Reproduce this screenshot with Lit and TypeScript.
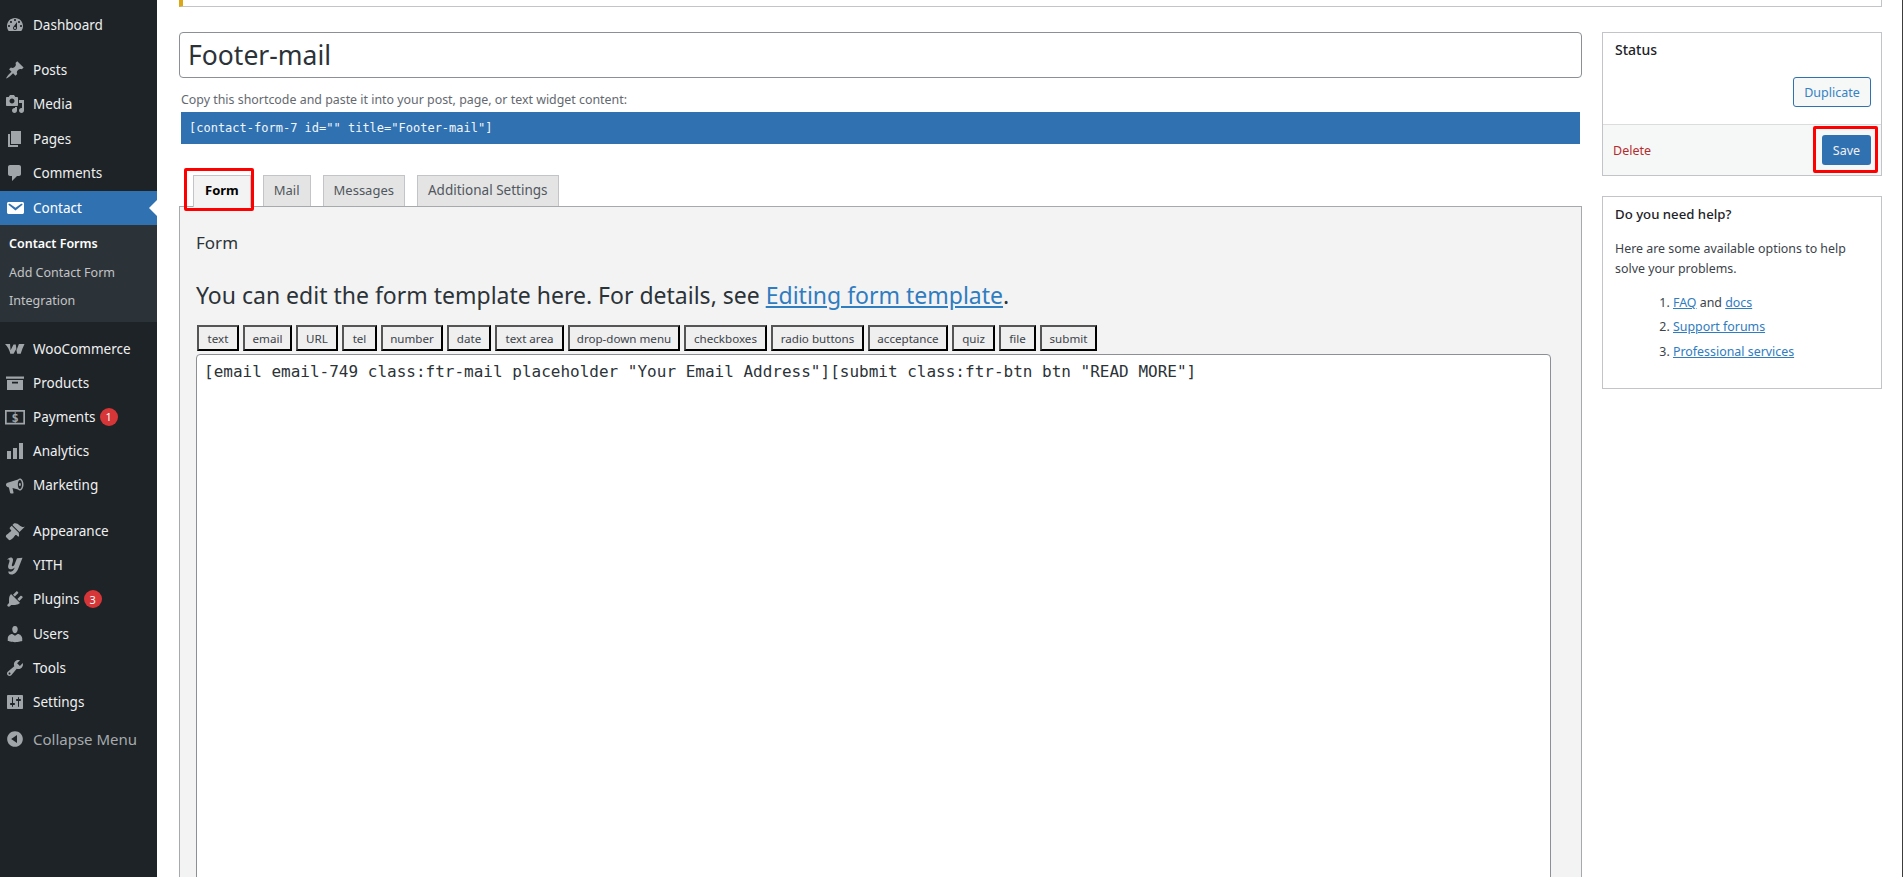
import { LitElement, html, css, svg } from "lit";
import { customElement } from "lit/decorators.js";

const I: Record<string, any> = {
  dashboard: svg`<path d="M3.76 16h12.48c1.1-1.37 1.76-3.11 1.76-5 0-4.42-3.58-8-8-8s-8 3.58-8 8c0 1.89.66 3.63 1.76 5zM10 4c.55 0 1 .45 1 1s-.45 1-1 1-1-.45-1-1 .45-1 1-1zM6 6c.55 0 1 .45 1 1s-.45 1-1 1-1-.45-1-1 .45-1 1-1zm8 0c.55 0 1 .45 1 1s-.45 1-1 1-1-.45-1-1 .45-1 1-1zm-5.37 5.55L12 7v6c0 1.1-.9 2-2 2s-2-.9-2-2c0-.57.24-1.08.63-1.45zM4 10c.55 0 1 .45 1 1s-.45 1-1 1-1-.45-1-1 .45-1 1-1zm12 0c.55 0 1 .45 1 1s-.45 1-1 1-1-.45-1-1 .45-1 1-1zm-5 3c0-.55-.45-1-1-1s-1 .45-1 1 .45 1 1 1 1-.45 1-1z" fill-rule="evenodd"/>`,
  post: svg`<path d="M10.44 3.02l1.82-1.82 6.36 6.35-1.83 1.82c-1.05-.68-2.48-.57-3.41.36l-.75.75c-.92.93-1.04 2.35-.35 3.41l-1.83 1.82-2.41-2.41-2.8 2.79c-.42.42-3.38 2.71-3.8 2.29s1.86-3.39 2.28-3.81l2.79-2.79L4.1 9.36l1.83-1.82c1.05.69 2.48.57 3.4-.36l.75-.75c.93-.92 1.05-2.35.36-3.41z"/>`,
  media: svg`<path fill-rule="evenodd" d="M13 11V4c0-.55-.45-1-1-1h-1.67L9 1H5L3.67 3H2c-.55 0-1 .45-1 1v7c0 .55.45 1 1 1h10c.55 0 1-.45 1-1zM7 4.5c1.38 0 2.5 1.12 2.5 2.5S8.38 9.5 7 9.5 4.5 8.38 4.5 7 5.62 4.5 7 4.5zM14 6h5v10.5c0 1.38-1.12 2.5-2.5 2.5S14 17.88 14 16.5s1.12-2.5 2.5-2.5c.17 0 .34.02.5.05V9h-3V6zm-4 8.05V13h2v3.5c0 1.38-1.12 2.5-2.5 2.5S7 17.88 7 16.5 8.12 14 9.5 14c.17 0 .34.02.5.05z"/>`,
  page: svg`<path d="M6 15V2h10v13H6zm-1 1h8v2H3V5h2v11z"/>`,
  comments: svg`<path d="M5 2h9c1.1 0 2 .9 2 2v7c0 1.1-.9 2-2 2h-2l-5 5v-5H5c-1.1 0-2-.9-2-2V4c0-1.1.9-2 2-2z"/>`,
  email: svg`<path d="M3.87 4h13.25C18.37 4 19 4.59 19 5.79v8.42c0 1.19-.63 1.79-1.88 1.79H3.87c-1.25 0-1.88-.6-1.88-1.79V5.79c0-1.2.63-1.79 1.88-1.79zm6.62 8.6l6.74-5.53c.24-.2.43-.66.13-1.07-.29-.41-.82-.42-1.17-.17l-5.7 3.86L4.8 5.83c-.35-.25-.88-.24-1.17.17-.3.41-.11.87.13 1.07z"/>`,
  woo: svg`<path d="M0 5h5l.6 6.200L8.500 5.500h2.300l.7 5.700 2.400-6.200H19.500c-1.500 3-2.800 6.200-3.800 9.800h-3.500l-1-4.800-2.600 4.800H5.300C4.800 11.500 2.500 7.500 0 5z"/>`,
  products: svg`<path fill-rule="evenodd" d="M1 3.500h18v2.300H1V3.500zM2 7h16v10H2V7zm5 1.800v1.600h6V8.800H7z"/>`,
  payments: svg`<path fill-rule="evenodd" d="M0 3h20v14.500H0V3zm1.700 1.700v11.100h16.600V4.700H1.700z"/><text x="10" y="14.800" text-anchor="middle" font-size="12" font-weight="700" font-family="DejaVu Sans Mono, monospace">$</text>`,
  analytics: svg`<path d="M18 18V2h-4v16h4zm-6 0V7H8v11h4zm-6 0v-8H2v8h4z"/>`,
  marketing: svg`<path fill-rule="evenodd" d="M18.500 9.500c0 3.300-1.600 6-3.600 6-.700 0-1.300-.300-1.900-.900L7.500 13l1 4.500c.100.500-.200 1-.700 1H6c-.400 0-.800-.300-.900-.700L3.900 12.500 2.500 12C1.600 11.700 1 10.800 1 9.800c0-1 .600-1.800 1.500-2.100L13 4.400c.6-.600 1.200-.900 1.900-.900 2 0 3.600 2.700 3.600 6zm-3.600 4.500c1.100 0 2.100-2 2.100-4.500S16 5 14.900 5s-2.100 2-2.100 4.500 1 4.500 2.100 4.500zm0-3c.600 0 1-.700 1-1.500S15.500 8 14.900 8s-1 .700-1 1.500.400 1.500 1 1.500z"/>`,
  appearance: svg`<path d="M14.480 11.060L7.410 3.990l1.500-1.500c.5-.56 2.300-.47 3.510.32 1.210.8 1.430 1.280 2.910 2.100 1.180.64 2.450 1.260 4.450.85zm-.71.71L6.700 4.700 4.930 6.470c-.39.39-.39 1.020 0 1.410l1.060 1.060c.39.39.39 1.030 0 1.420-.6.6-1.430 1.110-2.210 1.690-.35.26-.7.53-1.010.84C1.430 13.230.4 14.98 1 16l3 3c.88.5 2.610-.58 3.500-1.470l1.050-1.050c.58-.78 1.090-1.610 1.690-2.210.39-.39 1.030-.39 1.420 0l1.060 1.060c.39.39 1.020.39 1.410 0z"/>`,
  yith: svg`<path d="M2 5C3.500 2.200 7.500 1.500 8 4.500 8.300 6.500 6.800 9 6.800 10.500 6.800 11.800 8.300 11.500 9.300 10L12 3.200 17.500 2.800 13.500 13C12 17 9.500 19.500 6.500 19.500 4 19.500 3 17.800 3.500 16.300 5.500 17.300 8 16.800 9.300 13.500L9.700 12.500C8.300 14 6.500 14.700 4.800 14.200 2.800 13.500 2.800 11.500 3.500 9.500 4.200 7.500 4.800 6 4.300 5 4 4.400 3 4.500 2 5Z"/>`,
  plugins: svg`<path d="M13.110 4.360L9.870 7.600 8 5.730l3.240-3.240c.35-.34 1.050-.2 1.560.32.52.51.66 1.210.31 1.550zm-8 1.770l.91-1.120 9.010 9.010-1.190.84c-.71.71-2.630 1.160-3.820 1.160H6.140L4.900 17.260c-.59.59-1.540.59-2.120 0-.59-.58-.59-1.530 0-2.120l1.240-1.240v-3.880c0-1.130.4-3.190 1.090-3.890zm7.260 3.970l3.240-3.240c.34-.35 1.040-.21 1.550.31.52.51.66 1.210.31 1.550l-3.240 3.250z"/>`,
  users: svg`<path d="M10 9.250c-2.270 0-2.730-3.440-2.730-3.440C7 4.020 7.820 2 9.970 2c2.160 0 2.980 2.020 2.710 3.810 0 0-.41 3.440-2.680 3.440zm0 2.570L12.720 10c2.390 0 4.520 2.330 4.520 4.530v2.490s-3.650 1.130-7.240 1.130c-3.650 0-7.240-1.130-7.240-1.130v-2.490c0-2.250 1.940-4.480 4.470-4.480z"/>`,
  tools: svg`<path fill-rule="evenodd" d="M16.680 9.770c-1.340 1.340-3.300 1.670-4.950.99l-5.410 6.520c-.99.99-2.590.99-3.580 0s-.99-2.590 0-3.570l6.520-5.420c-.68-1.650-.35-3.610.99-4.950 1.280-1.280 3.120-1.620 4.720-1.060l-2.890 2.890 2.820 2.820 2.860-2.870c.53 1.580.18 3.390-1.080 4.650zM3.810 16.210c.4.39 1.040.39 1.430 0 .4-.4.4-1.040 0-1.430-.39-.4-1.030-.4-1.430 0-.39.39-.39 1.030 0 1.430z"/>`,
  settings: svg`<path fill-rule="evenodd" d="M18 16V4c0-.55-.45-1-1-1H3c-.55 0-1 .45-1 1v12c0 .55.45 1 1 1h14c.55 0 1-.45 1-1zM8 11h1c.55 0 1 .45 1 1s-.45 1-1 1H8v1.500c0 .28-.22.5-.5.5s-.5-.22-.5-.5V13H6c-.55 0-1-.45-1-1s.45-1 1-1h1V5.500c0-.28.22-.5.5-.5s.5.22.5.5V11zm5-2h-1c-.55 0-1-.45-1-1s.45-1 1-1h1V5.500c0-.28.22-.5.5-.5s.5.22.5.5V7h1c.55 0 1 .45 1 1s-.45 1-1 1h-1v5.500c0 .28-.22.5-.5.5s-.5-.22-.5-.5V9z"/>`,
  collapse: svg`<path fill-rule="evenodd" d="M10 2.160c4.330 0 7.840 3.510 7.840 7.840s-3.510 7.840-7.840 7.840S2.160 14.330 2.160 10 5.710 2.160 10 2.160zm2 11.720V6.120L6.180 9.970z"/>`,
};

type Item = { label: string; icon: string; badge?: string };
const group1: Item[] = [
  { label: "Posts", icon: "post" },
  { label: "Media", icon: "media" },
  { label: "Pages", icon: "page" },
  { label: "Comments", icon: "comments" },
];
const group2: Item[] = [
  { label: "WooCommerce", icon: "woo" },
  { label: "Products", icon: "products" },
  { label: "Payments", icon: "payments", badge: "1" },
  { label: "Analytics", icon: "analytics" },
  { label: "Marketing", icon: "marketing" },
];
const group3: Item[] = [
  { label: "Appearance", icon: "appearance" },
  { label: "YITH", icon: "yith" },
  { label: "Plugins", icon: "plugins", badge: "3" },
  { label: "Users", icon: "users" },
  { label: "Tools", icon: "tools" },
  { label: "Settings", icon: "settings" },
];
const tags: [string, number][] = [
  ["text", 42], ["email", 49], ["URL", 42], ["tel", 35], ["number", 62], ["date", 44], ["text area", 69],
  ["drop-down menu", 112], ["checkboxes", 83], ["radio buttons", 93], ["acceptance", 80], ["quiz", 43], ["file", 37], ["submit", 57],
];

@customElement("app-root")
export class AppRoot extends LitElement {
  static styles = css`
    :host { display: block; height: 877px; overflow: hidden; background: #fff; font-family: "Noto Sans", sans-serif; font-size: 13px; color: #3c434a; }
    * { box-sizing: border-box; }
    .page { display: flex; height: 877px; position: relative; }
    .menu { width: 157px; flex: none; background: #1d2327; padding-top: 8px; color: #f0f0f1; font-size: 13.500px; }
    .row { display: flex; align-items: center; height: 34.200px; padding-left: 5px; }
    .row svg { width: 20px; height: 20px; fill: #a0a5aa; flex: none; margin-right: 8px; }
    .sep { height: 11px; }
    .sep.big { height: 11.500px; }
    .row.current { background: #3071b1; color: #fff; position: relative; margin-top: .6px; }
    .row.current svg { fill: #fff; }
    .row.current::after { content: ""; position: absolute; right: 0; top: 9px; border: 8px solid transparent; border-right-color: #fff; border-left: 0; }
    .badge { background: #d63638; color: #fff; width: 18px; height: 18px; border-radius: 50%; font-size: 11px; display: flex; align-items: center; justify-content: center; margin-left: 4px; }
    .sub { background: #2c3338; padding: 5px 0 7px 9px; height: 97px; font-size: 12.500px; color: #c3c4c7; }
    .sub div { height: 28.300px; display: flex; align-items: center; }
    .sub .on { color: #fff; font-weight: 600; }
    .subgap { height: 9.700px; }
    .collapse { margin-top: 3px; color: #a7aaad; font-size: 15px; height: 34px; }
    .main { flex: 1; padding: 0 20px 0 22px; min-width: 0; }
    .edge { width: 1px; flex: none; background: #3c3c3c; }
    .notice { height: 7px; background: #fff; border: 1px solid #c3c4c7; border-top: 0; border-left: 4px solid #dba617; margin-bottom: 25px; }
    .cols { display: flex; gap: 20px; align-items: flex-start; }
    .left { width: 1403px; flex: none; }
    .right { width: 280px; flex: none; display: flex; flex-direction: column; gap: 20px; }
    .title { height: 46px; border: 1px solid #8c8f94; border-radius: 4px; padding-left: 8px; font-size: 26.500px; display: flex; align-items: center; color: #2c3338; background: #fff; }
    .hint { margin: 13px 0 0 2px; height: 21px; font-size: 12.400px; color: #646970; line-height: 18px; }
    .code { margin: 0 2px; height: 32px; background: #3071b1; color: #f0f6fc; font: 12px/32px "DejaVu Sans Mono", monospace; padding-left: 8px; }
    .tabs { display: flex; gap: 12px; margin: 31px 0 0 14px; height: 31px; position: relative; z-index: 1; }
    .tab { height: 31px; padding: 0 10px 2px; border: 1px solid #c3c4c7; border-bottom: 0; background: #e4e4e4; font-size: 13px; color: #50575e; display: flex; align-items: center; }
    .tab.on { background: #f3f3f3; color: #000; font-weight: 700; height: 32px; padding: 0 11px 3px; }
    .tab.wide { font-size: 13.500px; }
    .panel { background: #f3f3f3; border: 1px solid #a7aaad; height: 700px; padding: 24px 30px 0 16px; }
    .h { font-size: 17px; color: #2c3338; line-height: 24px; }
    .lead { margin-top: 25px; font-size: 23px; line-height: 30px; color: #2c3338; white-space: nowrap; }
    a { color: #2f7cc0; text-decoration: underline; }
    .tags { display: flex; gap: 4px; margin: 15px 0 0 1px; }
    .tags button { height: 26px; padding: 0; border: 2px solid; border-color: #555 #000 #000 #555; background: #efefef; color: #3c434a; font: 11.600px "Noto Sans", sans-serif; margin: 0; flex: none; }
    .ta { margin-top: 3px; height: 600px; background: #fff; border: 1px solid #8c8f94; border-radius: 4px 4px 0 0; padding: 6px 7px; font: 16px/21px "DejaVu Sans Mono", monospace; color: #2c3338; white-space: pre; }
    .card { background: #fff; border: 1px solid #c3c4c7; }
    .status-top { height: 91px; padding: 0 10px 0 12px; }
    .card-h { font-size: 14px; font-weight: 500; color: #1d2327; padding-top: 7px; line-height: 20px; }
    .btn { height: 30px; border-radius: 3px; display: flex; align-items: center; justify-content: center; font-size: 12.500px; }
    .dup { width: 78px; border: 1px solid #2f72b0; color: #3582c4; background: #f6f7f7; margin: 17px 0 0 auto; }
    .foot { height: 51px; background: #f6f7f7; border-top: 1px solid #dcdcde; display: flex; align-items: center; justify-content: space-between; padding: 0 10px; }
    .del { color: #b32d2e; font-size: 12.500px; }
    .save { width: 49px; background: #3071b1; color: #f0f0f1; }
    .help { height: 193px; padding: 6px 12px 0; font-size: 12.400px; line-height: 20px; }
    .help .card-h { padding-top: 0; font-size: 13.200px; line-height: 22px; }
    .help p { margin: 14px 0 0; }
    .help ol { margin: 12px 0 0; padding-left: 58px; }
    .help li { height: 24.300px; line-height: 24px; }
    .mark { position: absolute; border: 3px solid #f00; pointer-events: none; z-index: 3; border-radius: 2px; }
    .m1 { left: 184px; top: 168px; width: 70px; height: 43px; }
    .m2 { left: 1813px; top: 126px; width: 65px; height: 47px; }
  `;

  private row(i: Item) {
    return html`<div class="row"><svg viewBox="0 0 20 20">${I[i.icon]}</svg><span>${i.label}</span>${i.badge ? html`<span class="badge">${i.badge}</span>` : ""}</div>`;
  }

  render() {
    return html`<div class="page">
      <nav class="menu">
        ${this.row({ label: "Dashboard", icon: "dashboard" })}
        <div class="sep"></div>
        ${group1.map((i) => this.row(i))}
        <div class="row current"><svg viewBox="0 0 20 20">${I.email}</svg><span>Contact</span></div>
        <div class="sub"><div class="on">Contact Forms</div><div>Add Contact Form</div><div>Integration</div></div>
        <div class="subgap"></div>
        ${group2.map((i) => this.row(i))}
        <div class="sep big"></div>
        ${group3.map((i) => this.row(i))}
        <div class="row collapse"><svg viewBox="0 0 20 20">${I.collapse}</svg><span>Collapse Menu</span></div>
      </nav>
      <main class="main">
        <div class="notice"></div>
        <div class="cols">
          <div class="left">
            <div class="title">Footer-mail</div>
            <div class="hint">Copy this shortcode and paste it into your post, page, or text widget content:</div>
            <div class="code">[contact-form-7 id="" title="Footer-mail"]</div>
            <div class="tabs">
              <div class="tab on">Form</div><div class="tab">Mail</div><div class="tab">Messages</div><div class="tab wide">Additional Settings</div>
            </div>
            <div class="panel">
              <div class="h">Form</div>
              <div class="lead">You can edit the form template here. For details, see <a href="#">Editing form template</a>.</div>
              <div class="tags">${tags.map(([t, w]) => html`<button style="width:${w}px">${t}</button>`)}</div>
              <div class="ta">[email email-749 class:ftr-mail placeholder "Your Email Address"][submit class:ftr-btn btn "READ MORE"]</div>
            </div>
          </div>
          <aside class="right">
            <div class="card">
              <div class="status-top"><div class="card-h">Status</div><div class="btn dup">Duplicate</div></div>
              <div class="foot"><span class="del">Delete</span><div class="btn save">Save</div></div>
            </div>
            <div class="card help">
              <div class="card-h">Do you need help?</div>
              <p>Here are some available options to help solve your problems.</p>
              <ol>
                <li><a href="#">FAQ</a> and <a href="#">docs</a></li>
                <li><a href="#">Support forums</a></li>
                <li><a href="#">Professional services</a></li>
              </ol>
            </div>
          </aside>
        </div>
      </main>
      <div class="edge"></div>
      <div class="mark m1"></div>
      <div class="mark m2"></div>
    </div>`;
  }
}
